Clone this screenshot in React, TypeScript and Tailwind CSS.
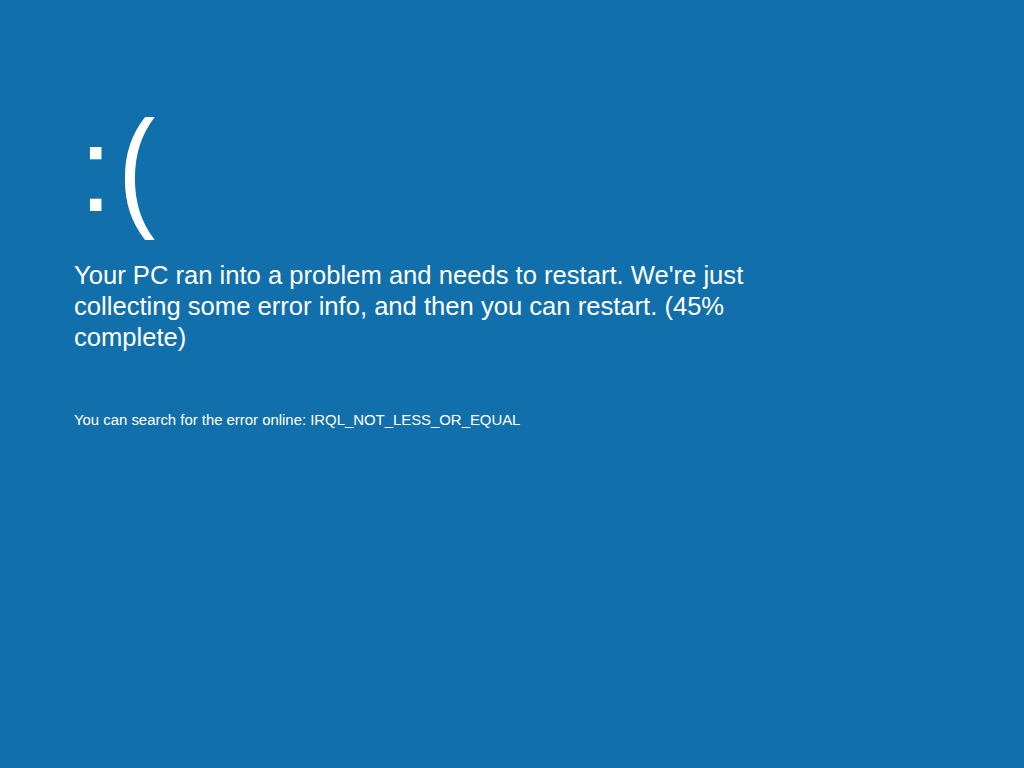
export default function App() {
  return (
    <div className="min-h-screen w-full bg-[#116fab] text-white font-['Liberation_Sans',Arial,sans-serif] pl-[74px] pt-[88px]">
      <div className="flex h-[160px] items-baseline pl-[5px] leading-[160px]">
        <span className="-translate-y-[2px] text-[120px]">:</span>
        <span className="ml-[6px] inline-block origin-left scale-x-[0.85] text-[132px]">(</span>
      </div>
      <p className="mt-[12px] w-[700px] text-[25.6px] leading-[31px]">
        Your PC ran into a problem and needs to restart. We're just collecting some error info, and then you can
        restart. (45% complete)
      </p>
      <p className="mt-[58px] text-[14.9px] leading-[18px]">
        You can search for the error online: IRQL_NOT_LESS_OR_EQUAL
      </p>
    </div>
  )
}
